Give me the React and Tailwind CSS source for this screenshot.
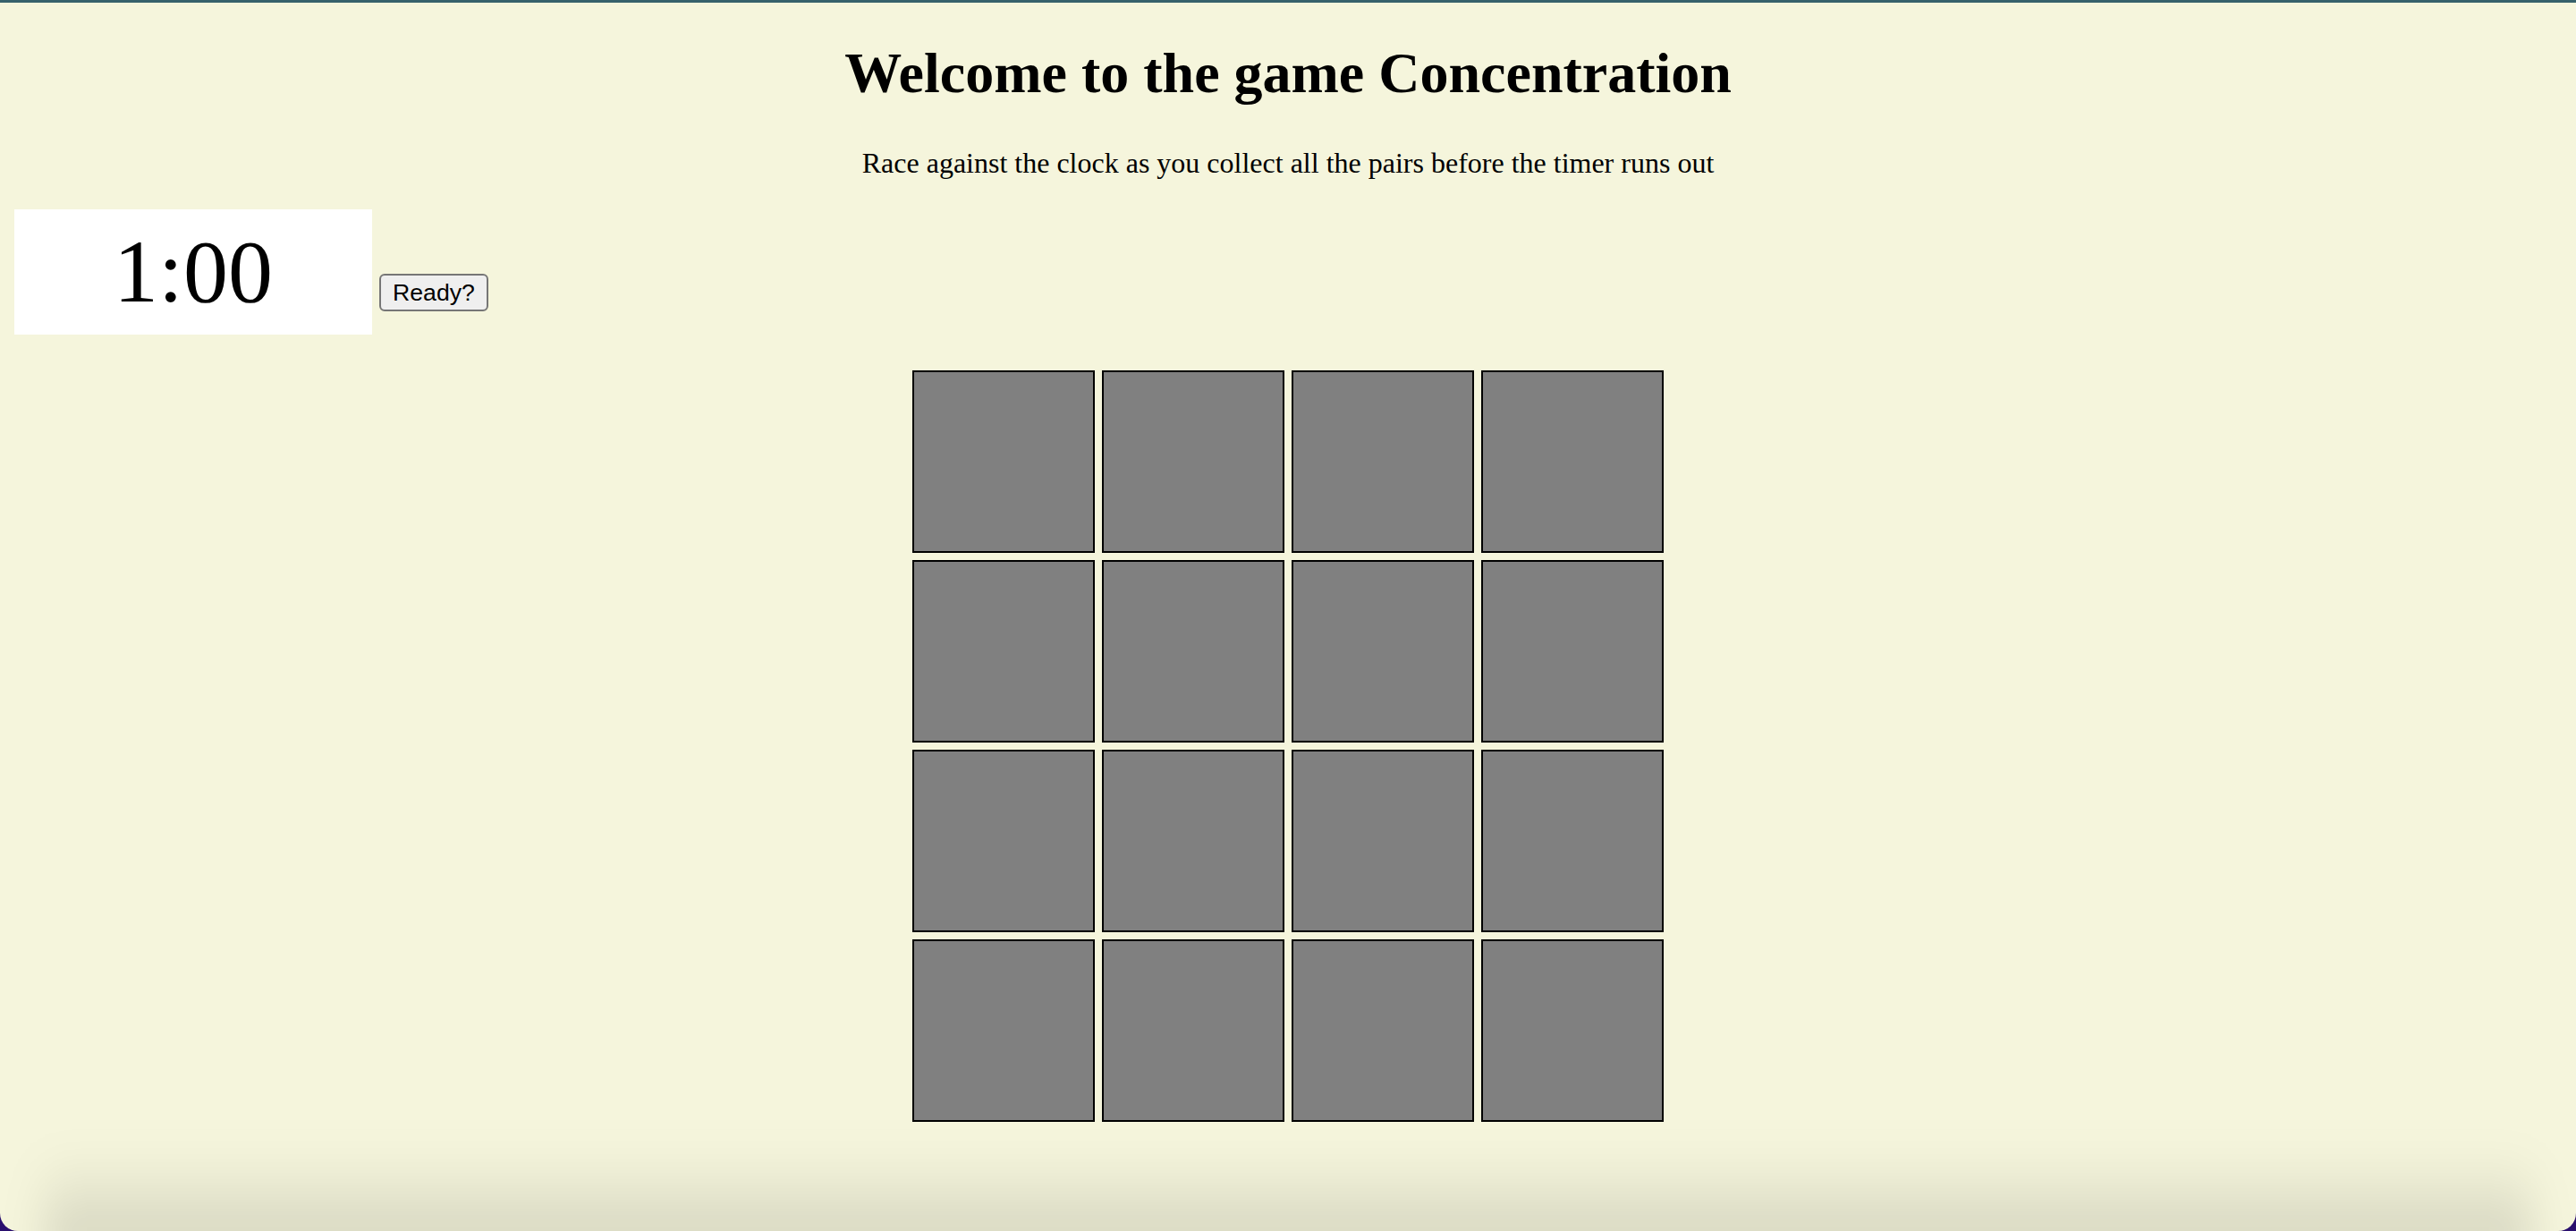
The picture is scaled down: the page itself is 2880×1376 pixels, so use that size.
import { useState } from 'react';

const CARD_COUNT = 16;

function Timer({ seconds }) {
  const m = Math.floor(seconds / 60);
  const s = String(seconds % 60).padStart(2, '0');
  return (
    <div className="w-[400px] h-[140px] bg-white text-center text-[100px] leading-[140px] text-black">
      {m}:{s}
    </div>
  );
}

function Card() {
  return <div className="w-[204px] h-[204px] bg-[#808080] border-2 border-black" />;
}

export default function App() {
  const [seconds] = useState(60);

  return (
    <div className="w-[2880px] h-[1376px] bg-[#2a0f6e]">
      <div
        className="relative w-full h-full overflow-hidden rounded-b-[20px] bg-[#f5f5dc] border-t-[3px] border-[#36616b]"
        style={{ fontFamily: '"Liberation Serif", "Times New Roman", serif' }}
      >
        <h1 className="mt-[43px] text-center text-[64px] font-bold leading-[72px] text-black">
          Welcome to the game Concentration
        </h1>
        <p className="mt-[46px] text-center text-[32px] leading-[36px] text-black">
          Race against the clock as you collect all the pairs before the timer runs out
        </p>

        <div className="mt-[34px] ml-[16px] flex items-start gap-2">
          <Timer seconds={seconds} />
          <button
            className="mt-[72px] h-[42px] px-[13px] rounded-[6px] border-2 border-[#767676] bg-[#efefef] text-[26.67px] leading-[30px] text-black"
            style={{ fontFamily: '"Liberation Sans", Arial, sans-serif' }}
          >
            Ready?
          </button>
        </div>

        <div className="mt-[40px] grid grid-cols-[repeat(4,204px)] gap-2 justify-center">
          {Array.from({ length: CARD_COUNT }).map((_, i) => (
            <Card key={i} />
          ))}
        </div>

        {/* soft shade along the bottom edge */}
        <div className="pointer-events-none absolute bottom-[-30px] left-[50px] right-[50px] h-[120px] bg-gradient-to-b from-transparent to-[#000000]/15 blur-[24px]" />
      </div>
    </div>
  );
}
